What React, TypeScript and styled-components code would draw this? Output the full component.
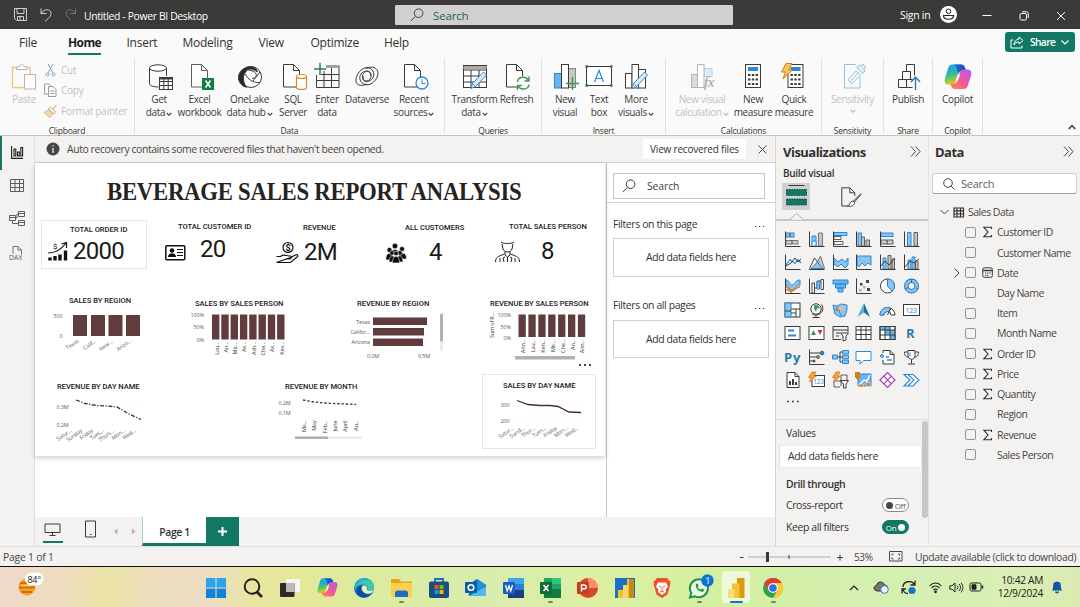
import React from 'react';
import styled, { createGlobalStyle } from 'styled-components';

const GREEN = '#117865';
const INK = '#3b3a39';
const BLUE = '#2b88d8';
const SKY = '#8cc4f0';
const BAR = '#613c3f';

const GlobalStyle = createGlobalStyle`
  * { box-sizing: border-box; }
  body { margin: 0; overflow: hidden; }
  #root { font-family: "Open Sans", "Noto Sans", sans-serif; color: #323130; }
  svg { display: block; flex: none; overflow: visible; }
`;

const Window = styled.div`
  width: 1080px;
  height: 607px;
  display: flex;
  flex-direction: column;
  background: #f3f2f1;
  overflow: hidden;
`;

/* ---------- Title bar ---------- */
const TitleBar = styled.header`
  height: 29px;
  flex: none;
  display: flex;
  align-items: center;
  background: #3b3a39;
  color: #fff;
  padding-left: 13px;
`;
const DocTitle = styled.span`
  margin-left: 13px;
  width: 311px;
  padding-top: 3px;
  font-size: 10.4px;
  letter-spacing: -0.35px;
  white-space: nowrap;
`;
const GlobalSearch = styled.div`
  width: 338px;
  height: 20px;
  margin-top: 1px;
  padding-left: 15px;
  display: flex;
  align-items: center;
  gap: 9px;
  background: #d2d0ce;
  color: #285f5a;
  font-size: 11.5px;
  letter-spacing: -0.15px;
  border-radius: 1px;
`;
const SignIn = styled.span`
  margin-left: 167px;
  width: 40px;
  font-size: 10.5px;
  letter-spacing: -0.3px;
  white-space: nowrap;
`;
const WindowButtons = styled.div`
  display: flex;
  gap: 27px;
  margin-left: 25px;
  padding-top: 2px;
`;

/* ---------- Menu ---------- */
const MenuBar = styled.nav`
  height: 29px;
  flex: none;
  display: flex;
  background: #fafafa;
  padding-left: 19px;
`;
const MenuItem = styled.div<{ $w: number; $on?: boolean }>`
  width: ${p => p.$w}px;
  height: 26px;
  padding-top: 5px;
  flex: none;
  font-size: 12px;
  letter-spacing: -0.25px;
  font-weight: ${p => (p.$on ? 700 : 400)};
  color: ${p => (p.$on ? '#201f1e' : '#323130')};
  span {
    display: inline-block;
    height: 21px;
    letter-spacing: ${p => (p.$on ? '-0.6px' : 'inherit')};
    border-bottom: 2.5px solid ${p => (p.$on ? GREEN : 'transparent')};
  }
`;
const ShareButton = styled.button`
  width: 70px;
  height: 20px;
  margin: 3px 5px 0 auto;
  padding: 0 0 0 5px;
  border: 0;
  border-radius: 3px;
  background: ${GREEN};
  color: #fff;
  font: 600 10.2px "Open Sans", sans-serif;
  letter-spacing: -0.6px;
  display: flex;
  align-items: center;
  gap: 6px;
`;

/* ---------- Ribbon ---------- */
const Ribbon = styled.div`
  height: 78px;
  flex: none;
  display: flex;
  background: #fafafa;
  border-bottom: 1px solid #c8c6c4;
`;
const Group = styled.section<{ $w: number }>`
  width: ${p => p.$w}px;
  flex: none;
  height: 76px;
  display: flex;
  flex-direction: column;
  border-right: 1px solid #e4e2e0;
  padding-top: 5px;
`;
const GroupBody = styled.div<{ $pad?: number }>`
  display: flex;
  height: 62px;
  flex: none;
  padding-left: ${p => p.$pad ?? 0}px;
`;
const GroupName = styled.div`
  text-align: center;
  font-size: 8.5px;
  line-height: 12px;
  letter-spacing: -0.22px;
`;
const BigButton = styled.div<{ $w: number; $off?: boolean }>`
  width: ${p => p.$w}px;
  flex: none;
  display: flex;
  flex-direction: column;
  align-items: center;
  white-space: nowrap;
  font-size: 10px;
  line-height: 13.4px;
  letter-spacing: -0.33px;
  text-align: center;
  color: ${p => (p.$off ? '#c3c1bf' : '#3b3a39')};
  svg { opacity: ${p => (p.$off ? 0.6 : 1)}; margin-bottom: 2px; }
`;
const LabelLine = styled.span`
  display: flex;
  align-items: center;
  gap: 1px;
  svg { margin: 2px 0 0 0; }
`;
const SmallButtons = styled.div`
  padding-left: 6px;
  margin-top: -3px;
  display: flex;
  flex-direction: column;
  color: #c3c1bf;
  font-size: 10px;
  letter-spacing: -0.25px;
`;
const SmallButton = styled.div`
  height: 20.3px;
  display: flex;
  align-items: center;
  gap: 3px;
  white-space: nowrap;
  svg { opacity: .6; }
`;
const RibbonEnd = styled.div`
  flex: 1;
  display: flex;
  justify-content: flex-end;
  align-items: flex-end;
  padding: 0 4px 5px 0;
`;

/* ---------- Work area ---------- */
const Work = styled.main`
  height: 411px;
  flex: none;
  display: flex;
  border-bottom: 1px solid #e1dfdd;
`;
const Rail = styled.aside`
  width: 35px;
  flex: none;
  background: #f3f2f1;
  border-right: 1px solid #e1dfdd;
`;
const RailItem = styled.div<{ $on?: boolean }>`
  height: 33.5px;
  display: flex;
  align-items: center;
  justify-content: center;
  border-left: 2px solid ${p => (p.$on ? GREEN : 'transparent')};
  padding: 0 2px 1px 0;
`;
const Center = styled.div`
  width: 741px;
  flex: none;
  display: flex;
  flex-direction: column;
  border-right: 1px solid #d8d6d4;
`;
const Notice = styled.div`
  height: 27px;
  flex: none;
  display: flex;
  align-items: center;
  padding: 0 8px 0 11px;
  border-bottom: 1px solid #d2d0ce;
  font-size: 10.4px;
  letter-spacing: -0.4px;
  white-space: nowrap;
`;
const NoticeText = styled.span`
  flex: 1;
  padding-left: 7px;
  color: #484644;
`;
const NoticeButton = styled.button`
  width: 103px;
  height: 20px;
  margin-right: 12px;
  border: 0;
  border-radius: 2px;
  background: #fff;
  color: #323130;
  font: 10px "Open Sans", sans-serif;
  letter-spacing: -0.2px;
`;
const Stage = styled.div`
  height: 354px;
  flex: none;
  display: flex;
  background: #fff;
`;
const CanvasArea = styled.div`
  width: 571px;
  flex: none;
`;
const ReportPage = styled.div`
  position: relative;
  width: 570px;
  height: 293px;
  background: #fff;
  box-shadow: 0 2px 5px rgba(0, 0, 0, 0.2);
`;
const ReportTitle = styled.h1`
  margin: 0 0 0 72px;
  padding-top: 14px;
  font: bold 25.5px/30px "Liberation Serif", serif;
  letter-spacing: -0.3px;
  transform: scaleX(0.893);
  transform-origin: left;
  color: #252423;
  white-space: nowrap;
`;
const Visual = styled.div<{ $x: number; $y: number; $w: number; $h: number; $boxed?: boolean }>`
  position: absolute;
  left: ${p => p.$x - 35}px;
  top: ${p => p.$y - 163}px;
  width: ${p => p.$w}px;
  height: ${p => p.$h}px;
  padding-top: ${p => (p.$boxed ? 7 : 0)}px;
  outline: ${p => (p.$boxed ? '1px solid #e6e6e6' : 'none')};
  outline-offset: -1px;
`;
const Card = styled(Visual)`
  padding-left: ${p => (p.$boxed ? 7 : 0)}px;
  padding-top: ${p => (p.$boxed ? 5 : 1)}px;
`;
const VisualTitle = styled.div<{ $ml?: number }>`
  margin-left: ${p => p.$ml ?? 0}px;
  font: 500 7.6px/10px Roboto, sans-serif;
  letter-spacing: -0.04px;
  color: #1b1a19;
  white-space: nowrap;
`;
const CardRow = styled.div<{ $gap: number }>`
  display: flex;
  gap: ${p => p.$gap}px;
  margin-top: -1px;
`;
const CardValue = styled.div<{ $down: number }>`
  margin-top: ${p => p.$down}px;
  font: 400 24px/24px Roboto, sans-serif;
  letter-spacing: -0.7px;
  color: #1b1a19;
`;

/* ---------- Filters ---------- */
const Filters = styled.div`
  flex: 1;
  border-left: 1px solid #c8c6c4;
  font-size: 10.4px;
  letter-spacing: -0.36px;
`;
const FilterTop = styled.div`
  height: 40px;
  padding: 10px 0 0 6px;
  border-bottom: 1px solid #d2d0ce;
`;
const FilterSearch = styled.div`
  width: 152px;
  height: 26px;
  border: 1px solid #c8c6c4;
  padding-left: 8px;
  display: flex;
  align-items: center;
  gap: 11px;
  letter-spacing: -0.1px;
  color: #33454d;
`;
const FilterHead = styled.div`
  height: 35px;
  display: flex;
  align-items: center;
  justify-content: space-between;
  padding: 6px 9px 0 6px;
  svg { margin-top: 6px; }
`;
const FilterDrop = styled.div`
  width: 156px;
  height: 38.500px;
  margin: 0 0 8px 6px;
  border: 1px solid #d2d0ce;
  display: flex;
  align-items: center;
  justify-content: center;
`;

/* ---------- Page tabs ---------- */
const PageTabs = styled.div`
  height: 29px;
  display: flex;
  background: #f3f2f1;
`;
const ViewToggle = styled.div<{ $w: number; $on?: boolean }>`
  width: 20px;
  height: 26px;
  margin-left: ${p => p.$w}px;
  display: flex;
  justify-content: center;
  align-items: center;
  padding-right: ${p => (p.$on ? 1 : 0)}px;
  border-bottom: 2px solid ${p => (p.$on ? GREEN : 'transparent')};
`;
const Arrows = styled.div`
  width: 42px;
  display: flex;
  align-items: center;
  gap: 13px;
  padding-left: 13px;
`;
const Tab = styled.div`
  width: 64px;
  border-bottom: 3px solid ${GREEN};
  border-left: 1px solid #a6cfc6;
  background: #fff;
  display: flex;
  align-items: center;
  justify-content: center;
  padding-top: 3px;
  font-size: 10.4px;
  font-weight: 600;
  letter-spacing: -0.4px;
`;
const AddTab = styled.div`
  width: 33px;
  background: ${GREEN};
  display: flex;
  align-items: center;
  justify-content: center;
`;

/* ---------- Side panels ---------- */
const VizPanel = styled.aside`
  width: 152px;
  flex: none;
  display: flex;
  flex-direction: column;
  font-size: 10.4px;
  letter-spacing: -0.36px;
  overflow: hidden;
`;
const PanelHead = styled.div<{ $right: number }>`
  height: 31px;
  flex: none;
  display: flex;
  justify-content: space-between;
  align-items: center;
  padding: 0 ${p => p.$right}px 0 7px;
  font-size: 13px;
  font-weight: 700;
  letter-spacing: -0.52px;
`;
const BuildLabel = styled.div`
  height: 15px;
  padding-left: 7px;
  line-height: 13px;
  font-size: 10px;
  font-weight: 600;
  letter-spacing: -0.35px;
`;
const BuildTabs = styled.div`
  height: 39px;
  display: flex;
  padding: 1px 0 0 6px;
  border-bottom: 2px solid #c8c6c4;
`;
const BuildTab = styled.div<{ $on?: boolean }>`
  width: 28px;
  height: 27px;
  margin-right: 27px;
  background: ${p => (p.$on ? '#d2d0ce' : 'transparent')};
  display: flex;
  align-items: center;
  justify-content: center;
`;
const VizGrid = styled.div`
  display: grid;
  grid-template-columns: repeat(6, 23.65px);
  grid-auto-rows: 23.6px;
  padding: 6px 0 0 5px;
  place-items: center;
`;
const MoreDots = styled.div`
  height: 27px;
  padding: 8px 0 0 10px;
`;
const Wells = styled.div`
  flex: 1;
  display: flex;
  border-top: 1px solid #e1dfdd;
`;
const WellsList = styled.div`
  width: 146px;
  padding-left: 3px;
`;
const WellName = styled.div<{ $bold?: boolean; $h: number }>`
  height: ${p => p.$h}px;
  padding: 0 13px 0 7px;
  display: flex;
  align-items: center;
  justify-content: space-between;
  font-weight: ${p => (p.$bold ? 600 : 400)};
`;
const WellDrop = styled.div`
  height: 23px;
  padding: 0 0 1px 8px;
  background: #fff;
  border: 1px solid #edebe9;
  border-left: 1px dotted #c8c6c4;
  display: flex;
  align-items: center;
`;
const ScrollThumb = styled.div`
  width: 6px;
  height: 97px;
  margin-top: 1px;
  border-radius: 3px;
  background: #c8c6c4;
`;
const Toggle = styled.div<{ $on?: boolean }>`
  width: 27px;
  height: 14px;
  border-radius: 7px;
  border: 1px solid ${p => (p.$on ? GREEN : '#8a8886')};
  background: ${p => (p.$on ? GREEN : '#fff')};
  color: ${p => (p.$on ? '#fff' : '#605e5c')};
  display: flex;
  flex-direction: ${p => (p.$on ? 'row-reverse' : 'row')};
  align-items: center;
  justify-content: center;
  gap: 2px;
  font-size: 8px;
  &::before {
    content: '';
    width: 7px;
    height: 7px;
    border-radius: 50%;
    background: ${p => (p.$on ? '#fff' : '#484644')};
  }
`;
const DataPanel = styled.aside`
  flex: 1;
  border-left: 1px solid #e6e4e2;
  font-size: 10.5px;
  letter-spacing: -0.5px;
  color: #484644;
`;
const DataHead = styled(PanelHead)`
  padding-left: 6px;
  color: #323130;
`;
const DataSearch = styled.div`
  width: 145px;
  height: 21px;
  margin: 6px 0 8px 3px;
  padding-left: 10px;
  background: #fff;
  border: 1px solid #d2d0ce;
  border-bottom-color: #a19f9d;
  border-radius: 3px;
  display: flex;
  align-items: center;
  gap: 6px;
  font-size: 11px;
  letter-spacing: -0.25px;
  color: #605e5c;
`;
const TreeRow = styled.div<{ $pad: number }>`
  height: 20.22px;
  padding-left: ${p => p.$pad}px;
  display: flex;
  align-items: center;
  white-space: nowrap;
`;
const Check = styled.span`
  width: 11px;
  height: 11px;
  flex: none;
  border: 1px solid #979593;
  border-radius: 2px;
`;
const FieldIcon = styled.span`
  width: 21px;
  padding-left: 5.5px;
  flex: none;
`;

/* ---------- Status bar ---------- */
const StatusBar = styled.footer`
  height: 20px;
  flex: none;
  display: flex;
  align-items: center;
  padding: 0 3px 0 3px;
  background: #f3f2f1;
  border-bottom: 1px solid #111;
  font-size: 10.4px;
  letter-spacing: -0.22px;
  color: #484644;
  white-space: nowrap;
`;
const Zoom = styled.div`
  margin-left: auto;
  display: flex;
  align-items: center;
  svg { margin-right: 9px; }
`;
const ZoomValue = styled.span`
  width: 35px;
  font-size: 10px;
  letter-spacing: -0.4px;
`;
const Update = styled.span`
  width: 162px;
  margin-left: 3px;
  letter-spacing: -0.35px;
  padding-top: 1px;
`;

/* ---------- Taskbar ---------- */
const Taskbar = styled.div`
  flex: 1;
  display: flex;
  background: linear-gradient(90deg, #efd9c9 0, #eddcc0 60px, #ebe2a6 105px, #ecddc0 160px, #ecdcc2 210px, #e9e5a2 250px, #e4e898 300px, #dcec9e 370px, #d9ecae 480px, #dcefa2 600px, #d3f0a0 720px, #d4efb0 860px, #d9efb4 1000px, #dbeab0 1080px);
`;
const Weather = styled.div`
  width: 197px;
  padding: 2px 0 0 18px;
`;
const TaskItem = styled.div<{ $on?: boolean; $mark?: boolean }>`
  width: 28px;
  height: 32px;
  margin: 4px 4.6px 0;
  flex: none;
  display: flex;
  flex-direction: column;
  align-items: center;
  justify-content: flex-end;
  border-radius: 3px;
  background: ${p => (p.$on ? 'rgba(255,255,255,.6)' : 'transparent')};
  &::after {
    content: '';
    width: ${p => (p.$on ? 13 : 5)}px;
    height: 2.5px;
    margin-top: 3px;
    border-radius: 2px;
    background: ${p => (p.$on ? '#1a73b8' : p.$mark ? '#7d8360' : 'transparent')};
  }
`;
const Tray = styled.div`
  flex: 1;
  display: flex;
  align-items: center;
  padding: 0 8px 0 57px;
  svg { margin-right: 9px; }
`;
const Clock = styled.div`
  flex: 1;
  text-align: right;
  padding-right: 8px;
  font-size: 10.2px;
  line-height: 13.2px;
  letter-spacing: -0.32px;
  color: #1b1b1b;
  white-space: nowrap;
`;

/* ---------- Drawing helpers ---------- */
type SvgProps = { w?: number; h?: number; vb?: string; c?: string; sw?: number; children: React.ReactNode };
const Svg = ({ w = 28, h = w, vb, c = INK, sw = 1, children }: SvgProps) => (
  <svg width={w} height={h} viewBox={vb ?? `0 0 ${w} ${h}`} fill="none" stroke={c} strokeWidth={sw}>{children}</svg>
);
const Chevron = ({ c = INK }: { c?: string }) => <Svg w={6} c={c} sw={1.1}><path d="M.8 2 3 4.3 5.200 2" /></Svg>;
const Magnifier = ({ s = 14, c = INK }: { s?: number; c?: string }) => (
  <Svg w={s} vb="0 0 14 14" c={c}><circle cx="8.600" cy="5.200" r="4.300" /><path d="M5.500 8.300.8 13" /></Svg>
);
const DoubleChevron = () => <Svg w={11} c="#484644"><path d="M1 .5 5.500 5.500 1 10.500M5.500.5 10 5.500 5.500 10.500" /></Svg>;
const Doc = () => <path d="M3.500 1.500h10l6 6v16.500h-16zM13.500 1.500v6h6" fill="#fff" />;
const Pencil = () => <g><path d="M10 25.500l1.500-5L22.500 9l3 3L14.500 23.500z" fill="#d9ecfa" stroke={BLUE} /><path d="M12 20.500l2.500 3" stroke={BLUE} strokeWidth=".8" /></g>;
const Calc = () => <g><rect x="6.500" y="1.500" width="15" height="23" fill="#fff" /><rect x="9" y="4" width="10" height="4" fill={BLUE} stroke="none" /><path d="M9 12h10M9 16.500h10M9 21h10" strokeWidth="2.200" strokeDasharray="2.400 1.400" /></g>;

const CopilotMark = ({ w = 27, id }: { w?: number; id: string }) => (
  <svg width={w} height={w} viewBox="0 0 28 28">
    <defs>
      <linearGradient id={id + 'a'} x1="0" y1="0" x2="0.3" y2="1"><stop offset="0" stopColor="#2a9df4" /><stop offset=".45" stopColor="#1fb5b8" /><stop offset=".75" stopColor="#7bc950" /><stop offset="1" stopColor="#f5c519" /></linearGradient>
      <linearGradient id={id + 'b'} x1="1" y1="0" x2="0" y2="1"><stop offset="0" stopColor="#b05cf0" /><stop offset=".5" stopColor="#f0569b" /><stop offset="1" stopColor="#ff8a4a" /></linearGradient>
      <linearGradient id={id + 'c'} x1="0" y1="0" x2="1" y2="0"><stop offset="0" stopColor="#1c6fd4" /><stop offset="1" stopColor="#2046c8" /></linearGradient>
    </defs>
    <path d="M8.500 1.500h8.500c2 0 3.300 1.200 4 3.200L22 8h-4c-2 0-3 1-3.600 3L12 18.500c-.7 2-1.700 3-4 3H4.500c-3 0-4.500-2-3.500-6L4 5.500C4.800 3 6 1.500 8.500 1.500z" fill={`url(#${id}a)`} />
    <path d="M9.500 1.500h7.500c2 0 3.300 1.200 4 3.200L22 8h-4c-2 0-3 1-3.600 3C13 7 13 3 9.500 1.500z" fill={`url(#${id}c)`} />
    <path d="M19.500 26h-8.500c-2 0-3.300-1.200-4-3.200L6 20.500h4c2 0 3-1 3.600-3L16 9.500c.7-2 1.700-3 4-3h3.500c3 0 4.500 2 3.500 6L24 22c-.8 2.500-2 4-4.500 4z" fill={`url(#${id}b)`} />
    <path d="M13.600 11.500h2.600l-2.100 6h-2.600z" fill="#fff" opacity=".75" />
  </svg>
);

/* ---------- Ribbon icons ---------- */
const icons = {
  paste: <Svg c="#8a8886"><path d="M7 4.500H2.500v20H14M20 11V4.500h-4.500" stroke="#e8a33d" strokeWidth="1.400" /><path d="M6.500 6.500V3.800h3c0-3 4.500-3 4.500 0h3v2.700z" fill="#fff" /><rect x="14.500" y="11.500" width="11" height="14.500" fill="#fff" /></Svg>,
  getData: <Svg><path d="M4.500 5v15.500c0 2.500 5 3.500 9 3.500M21.500 5v8" /><ellipse cx="13" cy="5" rx="8.500" ry="3.200" fill="#fff" /><rect x="14.500" y="14.500" width="13" height="12" fill="#fff" /><path d="M14.500 18.500h13M14.500 22.500h13M18.800 15v11.500M23.200 15v11.500" /><path d="M14.500 15.500h13" strokeWidth="2" /></Svg>,
  excel: <Svg c="#605e5c"><g transform="translate(2)"><Doc /></g><rect x="16" y="15" width="12" height="12" fill="#107c41" stroke="none" /><path d="M19.500 17.500l5 7M24.500 17.500l-5 7" stroke="#fff" strokeWidth="1.600" /></Svg>,
  lake: <Svg><circle cx="15" cy="14" r="10.500" fill="#fff" /><path d="M9 5C2 8 0 17 6 22c1.500 1.500 3 2 4.500 2.300C6 18 6.500 11 12 6.500c3-1 6 0 9.500 2.500C20 3.500 14 2.500 9 5z" fill="#2b2a29" /><path d="M9.500 11c2 5 7 9 14.500 8.500M12 7c2 0 6 1 7.500 3 2 2.500 0 5-3.500 5.500M24 9l-7 9" /></Svg>,
  sql: <Svg><g transform="translate(1)"><Doc /></g><path d="M17.500 13.500v11c0 2.600 10 2.600 10 0v-11" fill="#fff" stroke="#d88b2a" strokeWidth="1.200" /><ellipse cx="22.500" cy="13.500" rx="5" ry="2" fill="#fff" stroke="#d88b2a" strokeWidth="1.200" /></Svg>,
  enter: <Svg><path d="M3.500 12v12.500h22.500V2.500H13M3.500 17.500H26M8 11.500h18M11 8v16.500M18.500 4v20.500" /><path d="M13 3.500h13" stroke="#a19f9d" strokeWidth="3" /><path d="M7 0v12M1 6h12" stroke="#2d7d5c" strokeWidth="1.500" /></Svg>,
  dataverse: <Svg><path d="M14 21c-6 3-12 1-11-5C4 9 11 3 16 5c5 1.500 6 7 3.500 10.500-2.500 3.500-8 4-9.500 1-1.500-3 0-7.500 3.500-8 3-.5 4.500 2 4 4.500" /><path d="M13 5.500c6-3 12-1 12 5-.5 7-8 13-13 11C7 20 5.500 14.500 8 11c2.500-3.500 8-4 9.500-1 1.500 3 0 7.500-3.500 8-3 .5-4-2-3.500-4.500" /></Svg>,
  recent: <Svg><g transform="translate(1)"><Doc /></g><circle cx="22" cy="20" r="6" fill="#fff" stroke={BLUE} strokeWidth="1.300" /><path d="M22 16v4.500h3.500" stroke={BLUE} /></Svg>,
  transform: <Svg><rect x="2.500" y="2.500" width="23" height="22" fill="#fff" /><path d="M2.500 4.500h23" stroke="#b3a9a9" strokeWidth="3" /><path d="M2.500 2.500h23M2.500 7h23M2.500 13h23M2.500 19h23M10 7v17.500M18 7v17.500" /><Pencil /></Svg>,
  refresh: <Svg><Doc /><g stroke="#3c9a4e" strokeWidth="1.400"><circle cx="20" cy="20" r="7" fill="#fff" stroke="none" /><path d="M14.500 19c.5-5.500 8.500-6.500 11-1.500M26 13.500v4.500h-4.500M26 21.500c-.5 5.500-9 6-11 1M14.500 27v-4.500h4.500" /></g></Svg>,
  newVisual: <Svg><rect x="3.500" y="10.500" width="7" height="14.500" fill="#69b3ee" stroke={BLUE} /><rect x="17.500" y="5.500" width="7" height="19" fill="#c8c6c4" stroke="#8a8886" /><rect x="10.500" y="1.500" width="7" height="23.500" fill="#fff" /><path d="M21.500 14v13M15 20.500h13" stroke="#3c9a4e" strokeWidth="1.400" /></Svg>,
  textBox: <Svg><rect x="1.500" y="3.500" width="25" height="19" fill="#fff" /><path d="M9.500 19 14 7.500 18.500 19M11 15.500h6" stroke={BLUE} strokeWidth="1.200" /><path d="M.5 3.500h2.500M25 3.500h2.500M.5 22.500h2.500M25 22.500h2.500" stroke="#2b6f8d" strokeWidth="2.500" /></Svg>,
  moreVisuals: <Svg><rect x="3.500" y="10.500" width="6.500" height="14.500" fill="#fff" /><rect x="16.500" y="6.500" width="7" height="18.500" fill="#fff" /><rect x="10" y="1.500" width="6.500" height="23.500" fill="#fff" /><Pencil /></Svg>,
  visualCalc: <Svg c="#8a8886"><rect x="3.500" y="11.500" width="6" height="13" fill="#c8c6c4" /><rect x="16" y="5.500" width="8" height="8" fill="#d0e6f6" stroke="#8ab4d0" /><rect x="9.500" y="1.500" width="6.500" height="23" fill="#fff" /><text x="16" y="24" fontFamily="Liberation Serif" fontStyle="italic" fontSize="15" fill="#605e5c" stroke="none">fx</text></Svg>,
  newMeasure: <Svg><Calc /></Svg>,
  quick: <Svg><g transform="translate(1.500)"><Calc /></g><path d="M6 .5h6L8.500 7h4L3 16l2.500-7H1.500z" fill="#fbc65c" stroke="#d87a1a" /></Svg>,
  sensitivity: <Svg c="#4f9fc0"><path d="M21 14v11H5.500V1.500H17" /><path d="M9 17 17 8l4.500 4L13 20.500zM11.500 18.500 19 10" /><path d="M17.500 4.500l6 6 2.500-2.500-1.500-2 2.500-1.500-3-3.500-2 2-1.500-1z" fill="#cfe3ee" /></Svg>,
  publish: <Svg><path d="M4.500 16.500h8v8h-8zM8.500 16V8.500h8v8M12.500 8V1.500h8v11M12.500 16.500h6M12.500 24.500h6" /><path d="M21.500 27V15M17 19l4.500-5 4.500 5" stroke="#2b7fa8" strokeWidth="1.400" /></Svg>,
};

const RibbonButton = ({ w, icon, a, b, more, off }: { w: number; icon: React.ReactNode; a: string; b?: string; more?: boolean; off?: boolean }) => (
  <BigButton $w={w} $off={off}>
    {icon}
    <span>{a}</span>
    {(b || more) && <LabelLine>{b}{more && <Chevron c={off ? '#8a8886' : INK} />}</LabelLine>}
  </BigButton>
);

/* ---------- Visualization gallery ---------- */
const Axis = () => <path d="M1.500.5v15h15" />;
const gal: React.ReactNode[] = [
  <><rect x="2" y="2" width="8" height="4" fill={SKY} stroke={BLUE} /><path d="M2 9.500h12v3.500H2z" fill="#d0cecc" stroke="#797775" /><path d="M8 9.500V13M6 2v4" stroke="#484644" /><Axis /></>,
  <><path d="M4 5h4v10H4z" fill={SKY} stroke={BLUE} /><path d="M10.500 2h4v13h-4z" fill="#c8c6c4" stroke="#797775" /><path d="M4 10h4v5H4z" fill="#fff" stroke={BLUE} /><Axis /></>,
  <><path d="M2 1.500h13v3H2z" fill={SKY} stroke={BLUE} /><path d="M2 5.500h7v3H2zM2 10.500h9v3H2z" fill="#fff" stroke="#605e5c" /><Axis /></>,
  <><path d="M3 2h3.500v13H3z" fill={SKY} stroke={BLUE} /><path d="M6.500 6h3v9h-3zM11 9h3.500v6H11z" fill="#c8c6c4" stroke="#605e5c" /><Axis /></>,
  <><path d="M2 2h12v3.500H2z" fill={SKY} stroke={BLUE} /><path d="M2 9h12v4H2z" fill="#d0cecc" stroke="#605e5c" /><path d="M8 9v4" /><Axis /></>,
  <><path d="M4.500 1.500H8v13.500H4.500z" fill={SKY} stroke={BLUE} /><path d="M11 1.500h3.500v13.500H11z" fill="#c8c6c4" stroke="#605e5c" /><Axis /></>,
  <><path d="M2 11 6 5.500l5 4 3-4 3 3.500" stroke={BLUE} strokeWidth="1.200" /><path d="M2 12 7 9l4-5 3 4 3-3" /><Axis /></>,
  <><path d="M6 14.500 12.500 2 16.500 14.500z" fill="#c8c6c4" stroke="#797775" /><path d="M1.500 14.500 6.500 4l4 5" stroke="#484644" /><path d="M3 14.500 9.500 8l5 6.500z" fill={SKY} stroke={BLUE} /><path d="M1 15.500h15.500" /></>,
  <><path d="M2 4l4 4 4-3 3 3 3-4v7l-3 3-4-4-3 3-4-3z" fill={SKY} stroke={BLUE} /><Axis /></>,
  <><path d="M2 2h14v9l-3-2-3 3-3-3-3 4-2-2z" fill={SKY} stroke={BLUE} /><Axis /></>,
  <><path d="M4 4h3v11H4z" fill={SKY} stroke={BLUE} /><path d="M9 1.500h3v13.500H9zM13 5h2.500v10H13z" fill="#c8c6c4" stroke="#605e5c" /><path d="M2 12l4-5 4 4 6-7" /><Axis /></>,
  <><path d="M5 6h3v9H5zM9 3h3v12H9z" fill={SKY} stroke={BLUE} /><path d="M12.500 7H15v8h-2.500z" fill="#c8c6c4" stroke="#605e5c" /><path d="M2 13l5-6 4 2 5-4" /><Axis /></>,
  <><path d="M2 2c4 0 3 5 6 5s3-5 8-5v5c-5 0-5 5-8 5S5 7 2 7z" fill={SKY} stroke={BLUE} /><path d="M2 9c4 0 3 5 6 4s4-4 8-4M2 12c3-2 4 3 6 2" stroke="#d8842a" strokeWidth="1.600" /><Axis /></>,
  <><path d="M4 5h2.500v10H4zM13 1.500h2.500v10H13z" fill="#fff" stroke="#484644" /><path d="M6.500 5v5H9V3h4" stroke="#484644" /><path d="M9 3h2.500v8H9z" fill={SKY} stroke={BLUE} /><Axis /></>,
  <><path d="M1 2h15v4H1zM3.500 6h10v4h-10zM6 10h5v4H6z" fill="#69b3ee" stroke={BLUE} /></>,
  <><g fill="#484644" stroke="none"><path d="M11 2h3v3h-3zM5 5h2.500v2.500H5zM12 10h3v3h-3z" /><path d="M8 8h2.500v2.500H8zM4 11h2.500v2.500H4z" fill="#8cb8dc" /></g><Axis /></>,
  <><circle cx="8.500" cy="8" r="7" fill="#fff" /><path d="M8.500 1a7 7 0 0 1 4.500 12.400L8.500 8z" fill={SKY} stroke={BLUE} /></>,
  <><circle cx="8.500" cy="8" r="5.200" stroke="#1d6fb8" strokeWidth="4.600" /><circle cx="8.500" cy="8" r="5.200" stroke={SKY} strokeWidth="2.800" /><path d="M8.500 1v4M2 11l3-1.500M13 10l2 1" stroke="#1d6fb8" /></>,
  <><rect x="1" y="1" width="15" height="14" fill="#fff" /><path d="M1 1h6v14H1z" fill={SKY} stroke={BLUE} /><path d="M7 7h9M12 7v8M7 11h5M1 9h6" /></>,
  <><circle cx="8" cy="7" r="5.200" fill="#fff" /><path d="M6 3.500c2-1.500 5 0 6 2.500l-3 .5-1 3.500-2-3.500z" fill="#3c9a4e" stroke="none" /><path d="M4.500 15.500h7M8 13.300v2M13.500 2.500c3 4 1 10-5.500 10.500-2 0-3-.5-4-1.200" /></>,
  <><path d="M1 3l4 1 4-2 6 1v5l-2 6-5 1-5-3z" fill={SKY} stroke={BLUE} /><path d="M8 4l4 1v3l-4 2-2-3z" fill="#d9bf9a" stroke="none" /><path d="M2 8h5l2 6M5 4v4" stroke="#5c6f80" strokeWidth=".8" /></>,
  <><path d="M9 1l6 14-6-4.500z" fill="#1c7293" stroke="none" /><path d="M9 1v9.500L2.500 15z" fill="#4fb3d9" stroke="none" /></>,
  <><path d="M1 13a7.500 7.500 0 0 1 15 0h-4a3.500 3.500 0 0 0-7 0z" fill="#fff" /><path d="M1 13a7.500 7.500 0 0 1 11-6.600l-2 3.400a3.500 3.500 0 0 0-5 3.200z" fill={SKY} stroke={BLUE} /><path d="M8.500 13 12 6" /></>,
  <><rect x=".5" y="2.500" width="16" height="11" fill="#fff" /><text x="2.600" y="11" fontSize="7" fill={BLUE} stroke="none" fontFamily="Open Sans">123</text></>,
  <><rect x="1" y="1.500" width="15" height="13" fill="#fff" /><path d="M4 5.500h6M4 10.500h8" stroke={BLUE} strokeWidth="1.800" /></>,
  <><rect x="1" y="1.500" width="15" height="13" fill="#fff" /><path d="M3 10l2.500-5L8 10z" fill="#3c9a4e" stroke="none" /><path d="M9.500 5h5L12 10z" fill="#d13438" stroke="none" /></>,
  <><path d="M16 7V1.500H1v13h8M1 5h15M4 8h4M4 11h3" /><path d="M8.500 8h8L14 11v4l-3 1v-5z" fill="#fff" /></>,
  <><rect x="1" y="1.500" width="15" height="13" fill="#fff" /><path d="M1 5h15M1 9.500h15M6 1.500v13M11 1.500v13" /></>,
  <><rect x="1" y="1.500" width="15" height="13" fill="#fff" /><path d="M1 5h5v5h5v5h5V5h-5V1.500H1z" fill="#69b3ee" stroke="none" /><rect x="1" y="1.500" width="15" height="13" /><path d="M1 5h15M1 10h15M6 1.500v13M11 1.500v13" /></>,
  <text x="3" y="13" fontSize="13" fontWeight="700" fill="#2b7cab" stroke="none" fontFamily="Open Sans">R</text>,
  <text x="0" y="12.500" fontSize="13" fontWeight="700" fill="#2b7cab" stroke="none" fontFamily="Open Sans" textLength="16">Py</text>,
  <><path d="M2 4h11M2 8h8M2 12h5" /><circle cx="14" cy="4" r="1.800" fill={BLUE} stroke="#1d5f8b" /><circle cx="10" cy="8" r="1.500" fill="#a19f9d" stroke="#605e5c" /><circle cx="6" cy="12" r="1" fill="#a19f9d" /><Axis /></>,
  <><path d="M5 8h6M8 3v10M8 3h3M8 13h3" /><path d="M.5 6h5v4h-5zM10.500 1.500h6v3.500h-6zM10.500 6.300h6v3.500h-6zM10.500 11h6v3.500h-6z" fill={SKY} stroke={BLUE} /></>,
  <path d="M1 2.500h15v9H8.500L5 15v-3.500H1z" fill="#fff" stroke={BLUE} />,
  <><path d="M4 4V1.500h7l4 4V15H4v-4M11 1.500v4h4" fill="#fff" /><path d="M7 8h3M8 11h5" stroke={BLUE} strokeWidth="1.500" /><circle cx="3" cy="7" r="1.500" fill={SKY} stroke={BLUE} /></>,
  <><path d="M5 1.500h7v5c0 5-7 5-7 0zM5 3H1.500c0 4 1.500 5 4 5M12 3h3.500c0 4-1.500 5-4 5M8.500 10.500v4M5 15h7" fill="#fff" /><path d="M7 3.500v4" stroke={BLUE} /></>,
  <><path d="M3 .5h8l4 4V15.500H3zM11 .5v4h4" fill="#fff" /><path d="M6 13V9M9 13V7M12 13v-3" strokeWidth="2" /></>,
  <><rect x="4" y="3.500" width="12.500" height="11" fill="#fff" /><text x="5.500" y="12" fontSize="6.500" fill={BLUE} stroke="none" fontFamily="Open Sans">123</text><path d="M4 0h4L6 4h2.500L1.500 10 3 5.500H.5z" fill="#f7a13d" stroke="#d87a1a" strokeWidth=".8" /></>,
  <><path d="M9 3h6v6M2 10v5h6M9 3v11M2 9h12" stroke="#605e5c" /><path d="M8.500 8.500h8L14 12v4h-2.500v-4z" fill="#fff" /><path d="M4 0h4L6 4h2.500L1.500 10 3 5.500H.5z" fill="#f7a13d" stroke="#d87a1a" strokeWidth=".8" /></>,
  <><path d="M3 2h13v12H3z" fill="#69b3ee" stroke={BLUE} /><path d="M4 13l5-5 3 1 3-6" stroke="#fff" strokeWidth="1.500" /><path d="M0 0h5v5L2.500 8 0 5z" fill="#d87a1a" stroke="none" /><path d="M11 10.500h4v4h-4zM4 12h4v3H4z" fill="#d87a1a" stroke="#fff" strokeWidth=".5" /></>,
  <path d="M1 8l7.500-7.500L16 8l-7.500 7.500zM4.800 4.200l7.500 7.600M12.300 4.200l-7.500 7.600" fill="#fff" stroke="#a43fb0" strokeWidth="1.200" />,
  <path d="M1 2.500h9l6 5.500-6 6H1l6-6zM5 2.500 11 8l-6 6" fill="#fff" stroke={BLUE} strokeWidth="1.100" />,
];

/* ---------- Charts ---------- */
const Label = styled.text<{ $c?: string }>`
  font: 5.5px "Open Sans", sans-serif;
  letter-spacing: -0.15px;
  fill: ${p => p.$c ?? '#5f5d5b'};
  stroke: none;
`;
const Tick = ({ x, y, children }: { x: number; y: number; children: string }) => <Label x={x} y={y + 2} textAnchor="end">{children}</Label>;
const Slanted = ({ x, y, children }: { x: number; y: number; children: string }) => <Label x={x} y={y} textAnchor="end" transform={`rotate(-35 ${x} ${y})`}>{children}</Label>;
const Upright = ({ x, y, children }: { x: number; y: number; children: string }) => <Label $c="#3b3a39" x={x} y={y} textAnchor="end" transform={`rotate(-90 ${x} ${y})`}>{children}</Label>;
const Chart = ({ x, y, w, h, children }: { x: number; y: number; w: number; h: number; children: React.ReactNode }) => (
  <Svg w={w} h={h} vb={`${x} ${y} ${w} ${h}`} c="none">{children}</Svg>
);

const fields: [string, string][] = [
  ['Customer ID', 's'], ['Customer Name', ''], ['Date', 'd'], ['Day Name', ''], ['Item', ''], ['Month Name', ''],
  ['Order ID', 's'], ['Price', 's'], ['Quantity', 's'], ['Region', ''], ['Revenue', 's'], ['Sales Person', ''],
];

const Report = () => (
  <ReportPage>
    <ReportTitle>BEVERAGE SALES REPORT ANALYSIS</ReportTitle>

    <Card $x={41} $y={220} $w={106} $h={49} $boxed>
      <VisualTitle $ml={22}>TOTAL ORDER ID</VisualTitle>
      <CardRow $gap={5}>
        <Svg w={20} h={28} vb="0 -7 20 28" c="#111"><path d="M2 19.500v-3M7 19.500v-4.500M12 19.500v-6M17.500 19.500V9.500" strokeWidth="3.400" /><path d="M0 12c8 0 13-3 18-10M13.500 3l5-1.500V7" strokeWidth="1.200" /><text x="5" y="8" fontSize="8" fill="#111" stroke="none" fontFamily="Roboto">$</text></Svg>
        <CardValue $down={5}>2000</CardValue>
      </CardRow>
    </Card>
    <Card $x={165} $y={221} $w={90} $h={42}>
      <VisualTitle $ml={13}>TOTAL CUSTOMER ID</VisualTitle>
      <CardRow $gap={14}>
        <Svg w={21} h={30} vb="0 -14 21 30" c="#111"><rect x=".8" y=".8" width="19" height="14" rx="1" strokeWidth="1.500" /><path d="M12 4.500h6M12 7.500h6M12 10.500h6" /><circle cx="7" cy="5.500" r="2.300" fill="#111" stroke="none" /><path d="M3 12c0-5 8-5 8 0z" fill="#111" stroke="none" /></Svg>
        <CardValue $down={6}>20</CardValue>
      </CardRow>
    </Card>
    <Card $x={276} $y={222} $w={66} $h={42}>
      <VisualTitle $ml={27}>REVENUE</VisualTitle>
      <CardRow $gap={5}>
        <Svg w={23} h={32} vb="0 -10 23 32" c="#111" sw={1.200}><circle cx="12" cy="5.500" r="5" /><text x="9.600" y="9" fontSize="9" fontWeight="700" fill="#111" stroke="none" fontFamily="Roboto">$</text><path d="M.5 14.500h4c3-3 6-.5 10-.5 1.500 0 1 3-1 3H9M14.500 15.500l5-2.500c2-1 3 1 1.500 2l-6.500 5.500H.5z" /></Svg>
        <CardValue $down={8}>2M</CardValue>
      </CardRow>
    </Card>
    <Card $x={386} $y={222} $w={80} $h={42}>
      <VisualTitle $ml={19}>ALL CUSTOMERS</VisualTitle>
      <CardRow $gap={22}>
        <Svg w={21} h={32} vb="0 -11 21 32" c="#fafafa" sw={0.6}><g fill="#0c0c0c"><circle cx="9" cy="3" r="2.800" /><path d="M4.500 11c0-6 9-6 9 0z" /><circle cx="3.500" cy="7" r="2.500" /><circle cx="16" cy="6" r="2.500" /><path d="M0 17c-1-9 8-9 7 0zM12 16c0-8 9-8 8.500 0z" /><circle cx="6" cy="10" r="2.400" /><circle cx="14" cy="10" r="2.400" /><path d="M3 19c0-8 7-8 7 0zM10 19c0-8 7-8 7 0z" /><circle cx="10" cy="10.500" r="2.300" /><path d="M6.500 20c0-9 7-9 7 0z" /></g></Svg>
        <CardValue $down={8}>4</CardValue>
      </CardRow>
    </Card>
    <Card $x={495} $y={221} $w={95} $h={42}>
      <VisualTitle $ml={14}>TOTAL SALES PERSON</VisualTitle>
      <CardRow $gap={21}>
        <Svg w={25} h={32} vb="0 -11 25 32" c="#222"><path d="M6 0c2 2 11 2 13 0M7 2l1 5c1 4 8 4 9 0l1-5M10 10v3l2.500 2L15 13v-3M.5 20c0-6 5-6 9-8M24.500 20c0-6-5-6-9-8M5 20v-4M20 20v-4M9 20l-1-4 2-1M16 20l1-4-2-1M12.500 15v5" /></Svg>
        <CardValue $down={8}>8</CardValue>
      </CardRow>
    </Card>

    <Visual $x={50} $y={296} $w={100} $h={64}>
      <VisualTitle $ml={19}>SALES BY REGION</VisualTitle>
      <Chart x={50} y={306} w={100} h={54}>
        <Tick x={62.500} y={315.500}>500</Tick><Tick x={62.500} y={335.500}>0</Tick>
        {[73, 91, 108.500, 126].map(x => <rect key={x} x={x} y={315} width="14" height="21" fill={BAR} />)}
        {['Texas', 'Calif...', 'New ...', 'Arizo...'].map((t, i) => <Slanted key={t} x={79 + i * 17.500} y={342}>{t}</Slanted>)}
      </Chart>
    </Visual>
    <Visual $x={190} $y={298.500} $w={100} $h={64}>
      <VisualTitle $ml={5}>SALES BY SALES PERSON</VisualTitle>
      <Chart x={190} y={308.500} w={100} h={54}>
        <Tick x={204} y={314}>100%</Tick><Tick x={204} y={326.500}>50%</Tick><Tick x={204} y={339}>0%</Tick>
        {['Lau...', 'An...', 'Mic...', 'Ax...', 'Ash...', 'Che...', 'Ax...', 'Kev...'].map((t, i) => (
          <g key={i}><rect x={212 + i * 9.300} y="314" width="7.400" height="25" fill={BAR} /><Upright x={218.500 + i * 9.300} y={341.500}>{t}</Upright></g>
        ))}
      </Chart>
    </Visual>
    <Visual $x={348} $y={298.500} $w={100} $h={64}>
      <VisualTitle $ml={9}>REVENUE BY REGION</VisualTitle>
      <Chart x={348} y={308.500} w={100} h={54}>
        <Tick x={370} y={321}>Texas</Tick><Tick x={370} y={331.500}>Califor...</Tick><Tick x={370} y={341.500}>Arizona</Tick>
        <path d="M373 317h54v7.500h-54zM373 327.500h51v7.500h-51zM373 338h50v7.500h-50z" fill={BAR} />
        <Label x="367" y="357.500">0.0M</Label><Label x="418" y="357.500">0.5M</Label>
        <rect x="440" y="313" width="3" height="37" fill="#edebe9" /><rect x="440" y="313" width="3" height="28" rx="1.500" fill="#b3b0ad" />
      </Chart>
    </Visual>
    <Visual $x={486} $y={298.500} $w={108} $h={68}>
      <VisualTitle $ml={4}>REVENUE BY SALES PERSON</VisualTitle>
      <Chart x={486} y={308.500} w={108} h={58}>
        <Upright x={494} y={312}>Sum of R...</Upright>
        <Tick x={511} y={314}>100%</Tick><Tick x={511} y={326}>50%</Tick><Tick x={511} y={337}>0%</Tick>
        {['Ann...', 'Lau...', 'Ken...', 'Mic...', 'Che...', 'An...', 'Ann...'].map((t, i) => (
          <g key={i}><rect x={518.500 + i * 9.900} y="314" width="7.300" height="22.500" fill={BAR} /><Upright x={525 + i * 9.900} y={339}>{t}</Upright></g>
        ))}
        <rect x="515" y="355.500" width="60" height="3.500" fill="#b3b0ad" />
        <path d="M579 364.500h2M584 364.500h2M589 364.500h2" stroke="#484644" strokeWidth="1.800" />
      </Chart>
    </Visual>

    <Visual $x={50} $y={381.500} $w={100} $h={64}>
      <VisualTitle $ml={7}>REVENUE BY DAY NAME</VisualTitle>
      <Chart x={50} y={391.500} w={100} h={54}>
        <Tick x={68.500} y={406}>0.3M</Tick><Tick x={68.500} y={424}>0.2M</Tick>
        <path d="M70 406.500h72M70 424.500h72" stroke="#e4e4e4" strokeWidth=".5" strokeDasharray="1 2" />
        <path d="M76 399.500l9 3.500 11 2 12 .5 9 1 11 6.500 13 6" stroke="#4a2b30" strokeWidth="1.300" strokeDasharray="4 1.500 1.300 1.500" />
        {['Satur...', 'Sunday', 'Friday', 'Tues...', 'Thurs...', 'Mon...', 'Wed...'].map((t, i) => <Slanted key={t} x={72 + i * 10.700} y={431}>{t}</Slanted>)}
      </Chart>
    </Visual>
    <Visual $x={275} $y={381.500} $w={92} $h={64}>
      <VisualTitle $ml={10}>REVENUE BY MONTH</VisualTitle>
      <Chart x={275} y={391.500} w={92} h={54}>
        <Tick x={290.500} y={402.500}>0.2M</Tick><Tick x={290.500} y={412.500}>0.1M</Tick>
        <path d="M303 399.500l11 2 10 1 32 1.500" stroke="#4a2b30" strokeWidth="1.300" strokeDasharray="2.500 1.800" />
        {['Ma...', 'May', 'Feb...', 'June', 'April', 'Au...'].map((t, i) => <Upright key={t} x={306 + i * 10.300} y={420}>{t}</Upright>)}
        <rect x="295" y="436" width="67" height="2.500" fill="#edebe9" /><rect x="295" y="436" width="33" height="2.500" fill="#b3b0ad" />
      </Chart>
    </Visual>
    <Visual $x={482} $y={374} $w={114} $h={75} $boxed>
      <VisualTitle $ml={21}>SALES BY DAY NAME</VisualTitle>
      <Chart x={482} y={391} w={114} h={54}>
        <Tick x={509.500} y={405}>300</Tick><Tick x={509.500} y={421}>200</Tick>
        <path d="M512 405.500h72M512 421.500h72" stroke="#e4e4e4" strokeWidth=".5" strokeDasharray="1 2" />
        <path d="M517 400.500l11 4 12 1h10l8 1 11 5.500 12 .5" stroke="#4a2b30" strokeWidth="1.300" />
        {['Satur...', 'Sund...', 'Thur...', 'Tues...', 'Friday', 'Mon...', 'Wed...'].map((t, i) => <Slanted key={t} x={514 + i * 10.800} y={429}>{t}</Slanted>)}
      </Chart>
    </Visual>
  </ReportPage>
);

const Dots = () => <Svg w={12} h={3}><path d="M1 1.500h1.200M5 1.500h1.200M9 1.500h1.200" strokeWidth="1.200" /></Svg>;

const taskIcons: { el: React.ReactNode; mark?: boolean; on?: boolean }[] = [
  { el: <Svg w={20} c="none"><path d="M0 0h9.500v9.500H0zM10.500 0H20v9.500h-9.500z" fill="#2ba3ea" /><path d="M0 10.500h9.500V20H0zM10.500 10.500H20V20h-9.500z" fill="#1183d6" /></Svg> },
  { el: <Svg w={20} c="#222" sw={2}><circle cx="9" cy="8.500" r="7.300" /><path d="M14 14l5 5" strokeWidth="2.600" /></Svg> },
  { el: <Svg w={20} c="none"><rect x="6" y="1" width="14" height="13" rx="1" fill="#f5f5f5" /><rect x="0" y="5" width="14.500" height="14" rx="1" fill="#2d2b2a" /><path d="M6 5h8.500v9H6z" fill="#b9b9b5" /></Svg> },
  { el: <CopilotMark w={21} id="t" /> },
  { el: <Svg w={20} c="none"><circle cx="10" cy="10" r="10" fill="#1b78c8" /><path d="M1 8C3-1 20-3 20 9c0 4-4 5-7 4 2-4-1-7-5-6.500C5 7 2 8 1 12z" fill="#3fc9a8" /><path d="M1 8C3 0 12-2 16 2 9 1 3 4 1 12z" fill="#27b0e6" /><path d="M8 7c-3 5 1 11 9 9-4 5-13 5-15-3C3 9 5 7 8 7z" fill="#0f4f9c" /><path d="M8.500 8c3-1.500 5 1 4.500 4 2 2 5 1 7-.5-1 4-6 5-9 3.500-3-1.500-4-5-2.500-7z" fill="#e9f2c0" /></Svg> },
  { el: <Svg w={21} h={20} c="none"><path d="M0 1h8l2 2.500h11V19H0z" fill="#e8a51c" /><path d="M0 5h21v14H0z" fill="#fcd04e" /><path d="M4 19v-4c0-1.500 1-2.500 2.500-2.500h8c1.500 0 2.500 1 2.500 2.500v4z" fill="#1d6fc0" /></Svg>, mark: true },
  { el: <Svg w={20} c="none"><path d="M6 4V1h8v3" stroke="#1c6fb8" strokeWidth="1.800" /><rect y="3.500" width="20" height="16.500" rx="2" fill="#1b4d80" /><path d="M5.500 7h4v4h-4z" fill="#f25022" /><path d="M10.500 7h4v4h-4z" fill="#7fba00" /><path d="M5.500 12h4v4h-4z" fill="#00a4ef" /><path d="M10.500 12h4v4h-4z" fill="#ffb900" /></Svg> },
  { el: <Svg w={21} h={20} c="none"><path d="M3 7l9-6 9 6v11H4z" fill="#1066b5" /><path d="M4 18l17-10v10z" fill="#50b8f0" /><path d="M12 1l9 6-9 6z" fill="#1f8fe0" /><rect y="4" width="12" height="11" rx="1" fill="#0f5ca8" /><circle cx="6" cy="9.500" r="2.800" stroke="#fff" strokeWidth="1.600" /></Svg> },
  { el: <Svg w={21} h={20} c="none"><rect x="5" width="16" height="20" rx="1" fill="#2b7cd3" /><path d="M5 0h16v6H5z" fill="#41a5ee" /><path d="M5 12h16v8H5z" fill="#163f86" /><rect y="4" width="12" height="12" rx="1" fill="#185abd" /><path d="M2.500 7l1.700 6L6 8l1.800 5 1.700-6" stroke="#fff" strokeWidth="1.300" /></Svg> },
  { el: <Svg w={21} h={20} c="none"><rect x="4" width="17" height="20" rx="1" fill="#21a366" /><path d="M12 0h9v6h-9z" fill="#33c481" /><path d="M4 11h17v9H4z" fill="#107c41" /><rect y="4" width="12" height="12" rx="1" fill="#0f6b38" /><path d="M3.500 7l5 6M8.500 7l-5 6" stroke="#fff" strokeWidth="1.500" /></Svg>, mark: true },
  { el: <Svg w={21} h={20} c="none"><circle cx="11" cy="10" r="10" fill="#d2492a" /><path d="M11 0a10 10 0 0 1 10 10H11z" fill="#ff8f6b" /><rect y="4" width="12" height="12" rx="1" fill="#c43e1c" /><path d="M4.500 13.500V7H7c3 0 3 3.800 0 3.800H4.500" stroke="#fff" strokeWidth="1.400" /></Svg> },
  { el: <Svg w={20} c="none"><path d="M0 0h20v20H0z" fill="#1a6fc4" /><path d="M3 20V12h5V7h4V1h7v19z" fill="#f2c230" /><path d="M14 1h5v19h-5z" fill="#c88a12" /><path d="M8 7h5v13H8z" fill="#f8d768" /></Svg> },
  { el: <Svg w={18} h={20} c="none"><path d="M4 0h10l2 2.500 1.500 1-.5 4-2.500 9L9 20l-5.500-3.500L1 7.500l-.5-4 1.500-1z" fill="#f2502a" /><path d="M5 4.500h8l2 4-2.500 3.500.5 2-4 3-4-3 .5-2L3 8.500z" fill="#fff" /><path d="M6 8l2 1M12 8l-2 1M9 9v4M7 14l2-1 2 1" stroke="#f2502a" /></Svg> },
  { el: <Svg w={21} h={20}><path d="M1 19.500 2.300 15A9 9 0 1 1 6 18.300z" fill="#e8f7dc" stroke="#1f8f4d" strokeWidth="2" /><path d="M7 6c-1 5 4 8.500 7.500 7.500l.5-2-2-1-1.500 1.200C10 11 9 10 8.700 8.800L9.500 7.500 8.700 5.500z" fill="#1f8f4d" stroke="none" /><circle cx="18.500" cy="2.500" r="6.200" fill="#0c74d4" stroke="none" /><text x="16.200" y="5.800" fontSize="9" fill="#fff" stroke="none" fontFamily="Open Sans">1</text></Svg>, mark: true },
  { el: <Svg w={18} h={20} c="none"><path d="M10 0h7.500v20H10z" fill="#d99a12" /><path d="M5 5.500h7.500V20H5z" fill="#f2c230" /><path d="M1 11h6.500v9H1z" fill="#f9dc74" /></Svg>, on: true },
  { el: <Svg w={20} c="none"><circle cx="10" cy="10" r="10" fill="#2ba24c" /><path d="M10 5h8.700A10 10 0 0 1 10 20l4.300-7.500z" fill="#fcc934" /><path d="M1.300 5A10 10 0 0 1 18.700 5H10L5.700 12.500z" fill="#e33b2e" /><circle cx="10" cy="10" r="4.900" fill="#fff" /><circle cx="10" cy="10" r="3.800" fill="#2a6fe8" /></Svg>, mark: true },
];

export default function App() {
  return (
    <Window>
      <GlobalStyle />
      <TitleBar>
        <Svg w={15} c="#d0d0d0"><path d="M1.500 1.500h12v12h-10l-2-2zM4 1.500v5h7v-5M4.500 13.500V9.500h6v4M7 10v3" /></Svg>
        <Svg w={43} h={15} c="#d0d0d0"><path d="M13 1.500v5h5.500M13 6.500c3-5 10-5 10 0 0 3-3 5-6 8" /><path d="M47.500 1.500v5H42M47.500 6.500c-3-5-10-5-9 1 .5 2 2 3 4 5.500" stroke="#777573" /></Svg>
        <DocTitle>Untitled - Power BI Desktop</DocTitle>
        <GlobalSearch><Magnifier c="#444" />Search</GlobalSearch>
        <SignIn>Sign in</SignIn>
        <Svg w={17}><circle cx="8.500" cy="8.500" r="8.500" fill="#fff" stroke="none" /><circle cx="8.500" cy="5.300" r="2.300" stroke="#222" /><path d="M3.500 9.500h10c0 5-10 5-10 0z" stroke="#222" strokeWidth="1.200" /></Svg>
        <WindowButtons>
          <Svg w={10} c="#fff"><path d="M.5 4.500h9" /></Svg>
          <Svg w={10} c="#fff"><rect x="1" y="2.500" width="6.500" height="6.500" rx="1.500" /><path d="M3 .8h4.500c1 0 1.800.8 1.800 1.800V7" /></Svg>
          <Svg w={10} c="#fff"><path d="M1 1l8 8M9 1 1 9" /></Svg>
        </WindowButtons>
      </TitleBar>

      <MenuBar>
        <MenuItem $w={49}><span>File</span></MenuItem>
        <MenuItem $w={58.500} $on><span>Home</span></MenuItem>
        <MenuItem $w={56}><span>Insert</span></MenuItem>
        <MenuItem $w={76}><span>Modeling</span></MenuItem>
        <MenuItem $w={52}><span>View</span></MenuItem>
        <MenuItem $w={73.500}><span>Optimize</span></MenuItem>
        <MenuItem $w={50}><span>Help</span></MenuItem>
        <ShareButton>
          <Svg w={14} h={13} c="#fff"><path d="M3.500 4H1v8h11V9.500" /><path d="M9 1l4 3.500L9 8V6C6.500 6 5 7 4 9c0-3.500 2-5.500 5-6z" /></Svg>
          Share
          <Svg w={8} c="#fff" sw={1.200}><path d="M.5 2.500 4 6l3.500-3.500" /></Svg>
        </ShareButton>
      </MenuBar>

      <Ribbon>
        <Group $w={135}>
          <GroupBody $pad={12}>
            <RibbonButton w={24} icon={icons.paste} a="Paste" off />
            <SmallButtons>
              <SmallButton><Svg w={16} h={14} c="#2b6f9d"><path d="M6 1l5 9M11 1 6 10" /><circle cx="5.500" cy="11.500" r="1.500" /><circle cx="11.500" cy="11.500" r="1.500" /></Svg>Cut</SmallButton>
              <SmallButton><Svg w={16} h={14} c="#605e5c"><path d="M7 11H2.500V1H7l2 2" /><path d="M6.500 3.500H11l3 3v7H6.500zM8.500 8h4M8.500 10.500h4" /></Svg>Copy</SmallButton>
              <SmallButton><Svg w={16} h={14} c="#8a6a3a"><path d="M2 8.500l5-3 4 4-3 4z" fill="#f3c27a" stroke="#d88b2a" /><path d="M6.500 5l2-2 5 5-2 2zM11 5l3.500-4" /></Svg>Format painter</SmallButton>
            </SmallButtons>
          </GroupBody>
          <GroupName>Clipboard</GroupName>
        </Group>
        <Group $w={310}>
          <GroupBody $pad={5}>
            <RibbonButton w={38} icon={icons.getData} a="Get" b="data" more />
            <RibbonButton w={43} icon={icons.excel} a="Excel" b="workbook" />
            <RibbonButton w={57} icon={icons.lake} a="OneLake" b="data hub" more />
            <RibbonButton w={30} icon={icons.sql} a="SQL" b="Server" />
            <RibbonButton w={38} icon={icons.enter} a="Enter" b="data" />
            <RibbonButton w={42} icon={icons.dataverse} a="Dataverse" />
            <RibbonButton w={52} icon={icons.recent} a="Recent" b="sources" more />
          </GroupBody>
          <GroupName>Data</GroupName>
        </Group>
        <Group $w={97}>
          <GroupBody $pad={5}>
            <RibbonButton w={49} icon={icons.transform} a="Transform" b="data" more />
            <RibbonButton w={35} icon={icons.refresh} a="Refresh" />
          </GroupBody>
          <GroupName>Queries</GroupName>
        </Group>
        <Group $w={124}>
          <GroupBody $pad={5}>
            <RibbonButton w={36} icon={icons.newVisual} a="New" b="visual" />
            <RibbonButton w={32} icon={icons.textBox} a="Text" b="box" />
            <RibbonButton w={42} icon={icons.moreVisuals} a="More" b="visuals" more />
          </GroupBody>
          <GroupName>Insert</GroupName>
        </Group>
        <Group $w={156}>
          <GroupBody $pad={4}>
            <RibbonButton w={64} icon={icons.visualCalc} a="New visual" b="calculation" more off />
            <RibbonButton w={38} icon={icons.newMeasure} a="New" b="measure" />
            <RibbonButton w={44} icon={icons.quick} a="Quick" b="measure" />
          </GroupBody>
          <GroupName>Calculations</GroupName>
        </Group>
        <Group $w={62}>
          <GroupBody><RibbonButton w={61} icon={icons.sensitivity} a="Sensitivity" more off /></GroupBody>
          <GroupName>Sensitivity</GroupName>
        </Group>
        <Group $w={49}>
          <GroupBody><RibbonButton w={48} icon={icons.publish} a="Publish" /></GroupBody>
          <GroupName>Share</GroupName>
        </Group>
        <Group $w={50}>
          <GroupBody><RibbonButton w={49} icon={<CopilotMark w={28} id="r" />} a="Copilot" /></GroupBody>
          <GroupName>Copilot</GroupName>
        </Group>
        <RibbonEnd><Svg w={8} h={6} sw={1.500}><path d="M.8 5 4 1.500 7.200 5" /></Svg></RibbonEnd>
      </Ribbon>

      <Work>
        <Rail>
          <RailItem $on><Svg w={12} h={13} c="#201f1e" sw={1.100}><path d="M.6 0v12.400H12M3 3h1.800v7H3zM6.500 6h1.800v4H6.500zM9.800 1.500h1.800V10H9.800z" /></Svg></RailItem>
          <RailItem><Svg w={14} h={13} c="#605e5c"><path d="M.5.5h13v12H.5zM.5 4.500h13M.5 8.500h13M5 .5v12M9.500.5v12" /></Svg></RailItem>
          <RailItem><Svg w={16} h={16} c="#605e5c"><path d="M.5 4.500h6v5h-6zM9.500.5h6v5h-6zM9.500 9.500h6v5h-6zM6.500 7H8V3h1.500M3.500 9.500v3h6M.5 6.500h6M9.500 2.500h6M9.500 11.500h6" /></Svg></RailItem>
          <RailItem><Svg w={16} h={14} c="#797775"><path d="M4 7.500V.5h5l3.500 3.500v9.500H12M9 .5V4h3.500" /><text x="0" y="13.500" fontSize="6.800" fill="#605e5c" stroke="#f3f2f1" strokeWidth="1.200" paintOrder="stroke" fontFamily="Open Sans">DAX</text></Svg></RailItem>
        </Rail>

        <Center>
          <Notice>
            <Svg w={14}><circle cx="7" cy="7" r="6.500" fill="#484644" stroke="none" /><path d="M7 3.200v1.300M7 6v5" stroke="#fff" strokeWidth="1.200" /></Svg>
            <NoticeText>Auto recovery contains some recovered files that haven't been opened.</NoticeText>
            <NoticeButton>View recovered files</NoticeButton>
            <Svg w={9} c="#484644"><path d="M.5.5l8 8M8.500.5l-8 8" /></Svg>
          </Notice>
          <Stage>
            <CanvasArea><Report /></CanvasArea>
            <Filters>
              <FilterTop><FilterSearch><Magnifier />Search</FilterSearch></FilterTop>
              <FilterHead>Filters on this page<Dots /></FilterHead>
              <FilterDrop>Add data fields here</FilterDrop>
              <FilterHead>Filters on all pages<Dots /></FilterHead>
              <FilterDrop>Add data fields here</FilterDrop>
            </Filters>
          </Stage>
          <PageTabs>
            <ViewToggle $w={8} $on><Svg w={17} h={13}><path d="M1 1h15v8.500H1zM8.500 9.500v2.500M5.500 12.500h6" /></Svg></ViewToggle>
            <ViewToggle $w={17}><Svg w={11} h={18}><path d="M.5 1h10v16H.5zM5 14.500h1.500" /></Svg></ViewToggle>
            <Arrows>
              <Svg w={5} h={7} c="none"><path d="M4.500.5v6L.8 3.500z" fill="#b3b8b3" /></Svg>
              <Svg w={5} h={7} c="none"><path d="M.8.5v6l3.700-3z" fill="#a5bfae" /></Svg>
            </Arrows>
            <Tab>Page 1</Tab>
            <AddTab><Svg w={9} c="#fff" sw={2}><path d="M4.500 0v9M0 4.500h9" /></Svg></AddTab>
          </PageTabs>
        </Center>

        <VizPanel>
          <PanelHead $right={7}>Visualizations<DoubleChevron /></PanelHead>
          <BuildLabel>Build visual</BuildLabel>
          <BuildTabs>
            <BuildTab $on>
              <Svg w={21} h={38} vb="0 -7.500 21 38"><path d="M2.500 0h16" /><path d="M.5 4h20v6H.5zM.5 13.500h20v6H.5z" fill={GREEN} stroke="#0b4e42" strokeDasharray="1.500 1" /><path d="M3.500 34.300 10.500 28l7 6.300" fill="#f3f2f1" stroke="#b3b0ad" /></Svg>
            </BuildTab>
            <BuildTab>
              <Svg w={21} h={20}><path d="M7 19H.8V.8h8l5 5V9M8.800.8v5h5" /><path d="M20 6.500 12 14.500M20 7.500 13 15.500" /><path d="M12 14c-3 0-2.500 4-5.500 5 4 1 7-.5 7-3.500z" fill="#fff" /></Svg>
            </BuildTab>
          </BuildTabs>
          <VizGrid>{gal.map((g, i) => <Svg key={i} w={17} h={16}>{g}</Svg>)}</VizGrid>
          <MoreDots><Svg w={14} h={3}><path d="M1 1.500h1.800M6 1.500h1.800M11 1.500h1.800" strokeWidth="1.600" /></Svg></MoreDots>
          <Wells>
            <WellsList>
              <WellName $h={25}>Values</WellName>
              <WellDrop>Add data fields here</WellDrop>
              <WellName $bold $h={31}>Drill through</WellName>
              <WellName $h={12}>Cross-report<Toggle>Off</Toggle></WellName>
              <WellName $h={32}>Keep all filters<Toggle $on>On</Toggle></WellName>
            </WellsList>
            <ScrollThumb />
          </Wells>
        </VizPanel>

        <DataPanel>
          <DataHead $right={6}>Data<DoubleChevron /></DataHead>
          <DataSearch><Svg w={12} c="#484644"><circle cx="5" cy="5" r="4.300" /><path d="M8 8l3.500 3.500" /></Svg>Search</DataSearch>
          <TreeRow $pad={11}>
            <Svg w={9} h={6} c="#484644"><path d="M.5 1 4.500 5l4-4" /></Svg>
            <Svg w={19} h={11} c="#323130"><path d="M5 1h9.500v9H5zM5 3.800h9.500M5 7h9.500M8 1v9M11.500 1v9" strokeWidth="1.200" /></Svg>
            Sales Data
          </TreeRow>
          {fields.map(([name, kind]) => (
            <TreeRow key={name} $pad={kind === 'd' ? 25 : 36}>
              {kind === 'd' && <Svg w={11} h={10} c="#484644"><path d="M.5.5 5 5 .5 9.500" /></Svg>}
              <Check />
              <FieldIcon>
                {kind === 's' && <Svg w={11} h={12} c="#323130" sw={1.100}><path d="M9.500 3V1.200H1.800L6 6 1.800 10.800h7.700V9" /></Svg>}
                {kind === 'd' && <Svg w={11}><rect x=".8" y=".8" width="9.500" height="9.500" rx="1.500" /><path d="M.8 3.500h9.500" strokeWidth="1.500" /><path d="M3 6h5.500M3 8.300h4" strokeDasharray="1.300 .8" /></Svg>}
              </FieldIcon>
              {name}
            </TreeRow>
          ))}
        </DataPanel>
      </Work>

      <StatusBar>
        Page 1 of 1
        <Zoom>
          <Svg w={106} h={12}><path d="M1 6.500h3.500M98 6.500h6M101 3.500v6" /><path d="M9 6h83" stroke="#a19f9d" strokeWidth=".8" /><path d="M28.500 1v10" strokeWidth="3" /><path d="M50 4v4" /></Svg>
          <ZoomValue>53%</ZoomValue>
          <Svg w={14} h={11} c="#484644"><path d="M.5.5h12.500v9.500H.5zM3 4.500V3h1.500M9 3h1.500v1.500M3 6.500V8h1.500M9 8h1.500V6.500" /></Svg>
        </Zoom>
        <Update>Update available (click to download)</Update>
      </StatusBar>

      <Taskbar>
        <Weather>
          <Svg w={28} h={28} c="none"><circle cx="9" cy="18" r="8.500" fill="#f2a61e" /><path d="M2 14h13M1 18.500h16M3 23h11" stroke="#d9661e" strokeWidth="2" /><path d="M3 16.500h10" stroke="#fbd85e" strokeWidth="1.500" /><rect x="7" y="3.500" width="18.500" height="13" rx="6.500" fill="#fdfdfb" /><text x="9.500" y="13.500" fontSize="9" fill="#222" stroke="none" fontFamily="Open Sans" textLength="13.500">84°</text></Svg>
        </Weather>
        {taskIcons.map((t, i) => <TaskItem key={i} $on={t.on} $mark={t.mark}>{t.el}</TaskItem>)}
        <Tray>
          <Svg w={10} h={7} c="#222" sw={1.200}><path d="M1 6l4-4 4 4" /></Svg>
          <Svg w={24} h={14} c="none"><path d="M10 11c-5 0-5-5-1.500-5.500C9 1 15.500 1 16.500 5c4 0 4 6 0 6z" fill="#77736f" stroke="#333" /><circle cx="16.500" cy="9.500" r="3.800" fill="#eef4ff" stroke="#3c78c8" /></Svg>
          <Svg w={17} h={15} c="#222" sw={1.300}><path d="M2 7c0-6 9-7 11-3M14 .5V5H9.500M2 9c.5 3 3 4.500 5 4.500M1 13.500V9h4" /><circle cx="11" cy="10.500" r="3.600" fill="#1474c8" stroke="none" /></Svg>
          <Svg w={13} h={11} c="#222" sw={1.100}><path d="M.5 4c3.500-4 8.500-4 12 0M2.500 6c2.500-2.500 5.500-2.500 8 0M4.500 8c1.500-1.300 2.500-1.300 4 0" transform="translate(2)" /><circle cx="8.500" cy="9.800" r=".8" fill="#222" /></Svg>
          <Svg w={14} h={11} c="#222"><path d="M.8 3.800H3L6 1v9L3 7.200H.8zM8 3.500c1 1 1 3 0 4M10 2c2 2 2 5 0 7M12 .8c2.500 3 2.500 6.500 0 9.500" /></Svg>
          <Svg w={14} h={10} c="#222"><rect x="-2" y="1" width="11" height="8" rx="1.500" /><path d="M0 2.800h4v4.400H0z" fill="#222" /><path d="M10.500 3.500v3" strokeWidth="1.500" /></Svg>
          <Clock>10:42 AM<br />12/9/2024</Clock>
          <Svg w={12} h={14} c="none"><path d="M1 10.500c1.500-2 1-5 1.500-7C3 1 9 1 9.500 3.500c.5 2 0 5 1.500 7zM4 11.500h4c0 2.500-4 2.500-4 0z" fill="#0f56a8" /></Svg>
        </Tray>
      </Taskbar>
    </Window>
  );
}
